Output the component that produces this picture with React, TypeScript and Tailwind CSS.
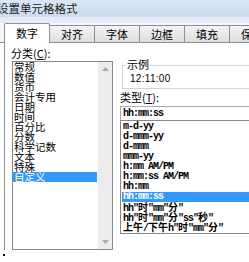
const CJK = /([\u3000-\u9fff\uff00-\uffef]+)/;

// ASCII in a narrow mono face, CJK in full width — mimics the SimSun list rows
function Mixed({ text }: { text: string }) {
  return (
    <>
      {text.split(CJK).map((part, i) =>
        CJK.test(part) ? (
          <span key={i} className="tracking-normal font-['Noto_Sans_CJK_SC',sans-serif]">
            {part}
          </span>
        ) : (
          <span key={i}>{part}</span>
        ),
      )}
    </>
  );
}

const categories = ['常规', '数值', '货币', '会计专用', '日期', '时间', '百分比', '分数', '科学记数', '文本', '特殊', '自定义'];

const formats = [
  'm-d-yy',
  'd-mmm-yy',
  'd-mmm',
  'mmm-yy',
  'h:mm AM/PM',
  'h:mm:ss AM/PM',
  'hh:mm',
  'hh:mm:ss',
  'hh"时"mm"分"',
  'hh"时"mm"分"ss"秒"',
  '上午/下午h"时"mm"分"',
];

const tabs = ['数字', '对齐', '字体', '边框', '填充', '保护'];

export default function App() {
  return (
    <div className="relative w-[249px] h-[262px] overflow-hidden bg-white text-black font-['Noto_Sans_CJK_SC',sans-serif]">
      <div className="h-[17px] bg-gradient-to-b from-[#dbe7f5] to-[#cbdbee] pl-0 text-[11.5px] leading-[16px] -indent-[3px] text-[#1e1e1e]">
        设置单元格格式
      </div>
      <div className="h-[6px] bg-[#e3ecf6]" />

      <div className="flex items-end h-[20px] pl-[4px] border-b border-[#8e8f8f] bg-[#f3f6fa]">
        {tabs.map((t, i) =>
          i === 0 ? (
            <div
              key={t}
              className="w-[46px] h-[20px] -mb-px bg-white border border-b-0 border-[#8e8f8f] rounded-t-[2px] text-[11px] leading-[18px] text-center shrink-0"
            >
              {t}
            </div>
          ) : (
            <div
              key={t}
              className="w-[45px] h-[17px] bg-gradient-to-b from-[#f4f4f4] to-[#dedede] border-t border-r border-[#8e8f8f] text-[11px] leading-[16px] text-center shrink-0"
            >
              {t}
            </div>
          ),
        )}
      </div>

      <div className="ml-[4px] h-[207px] border-l border-[#8e8f8f] flex">
        <div className="ml-[7px] pt-[4px] w-[101px] flex flex-col shrink-0">
          <div className="-ml-px text-[11px] leading-[12px]">
            分类(<span className="underline">C</span>):
          </div>
          <div className="mt-[2px] h-[191px] border border-[#828790] flex">
            <div className="flex-1 pt-0">
              {categories.map((c, i) => (
                <div
                  key={c}
                  className={`h-[10px] leading-[10px] text-[10.5px] pl-px whitespace-nowrap ${
                    i === categories.length - 1 ? 'bg-[#3399ff] text-white' : ''
                  }`}
                >
                  {c}
                </div>
              ))}
            </div>
            <div className="w-[15px] bg-[#ececec] border-l border-[#f8f8f8] flex flex-col items-center justify-between py-[5px]">
              <svg width="7" height="4" viewBox="0 0 7 4">
                <path d="M0 4 L3.5 0 L7 4 Z" fill="#a8a8a8" />
              </svg>
              <svg width="7" height="4" viewBox="0 0 7 4">
                <path d="M0 0 L3.5 4 L7 0 Z" fill="#a8a8a8" />
              </svg>
            </div>
          </div>
        </div>

        <div className="ml-[7px] w-[140px] shrink-0 flex flex-col">
          <div className="relative ml-[2px] mt-[22px] h-[24px] border border-r-0 border-[#cfd6dc]">
            <span className="absolute left-[3px] -top-[8px] bg-white px-px text-[11px] leading-[13px]">示例</span>
            <div className="pt-[8px] pl-[7px] text-[10px] leading-[10px] tracking-[0.3px] font-['Liberation_Sans',sans-serif]">
              12:11:00
            </div>
          </div>
          <div className="mt-[2px] text-[11px] leading-[12px]">
            类型(<span className="underline">T</span>):
          </div>
          <div className="mt-[3px] h-[15px] border border-r-0 border-[#abadb3] pl-[2px] text-[10px] leading-[13px] tracking-[-1px] font-['Liberation_Mono',monospace] font-semibold">
            hh:mm:ss
          </div>
          <div className="-mt-px h-[114px] border border-r-0 border-[#828790] pt-px pl-px">
            {formats.map((f, i) => (
              <div
                key={f}
                className={`h-[10px] leading-[10px] text-[10px] pl-px whitespace-nowrap tracking-[-1px] font-['Liberation_Mono',monospace] font-semibold ${
                  i === 7 ? 'bg-[#3399ff] text-white' : ''
                }`}
              >
                <Mixed text={f} />
              </div>
            ))}
          </div>
        </div>
      </div>
      <div className="ml-[3px] mt-[4px] w-[2px] h-[2px] bg-black" />
    </div>
  );
}
